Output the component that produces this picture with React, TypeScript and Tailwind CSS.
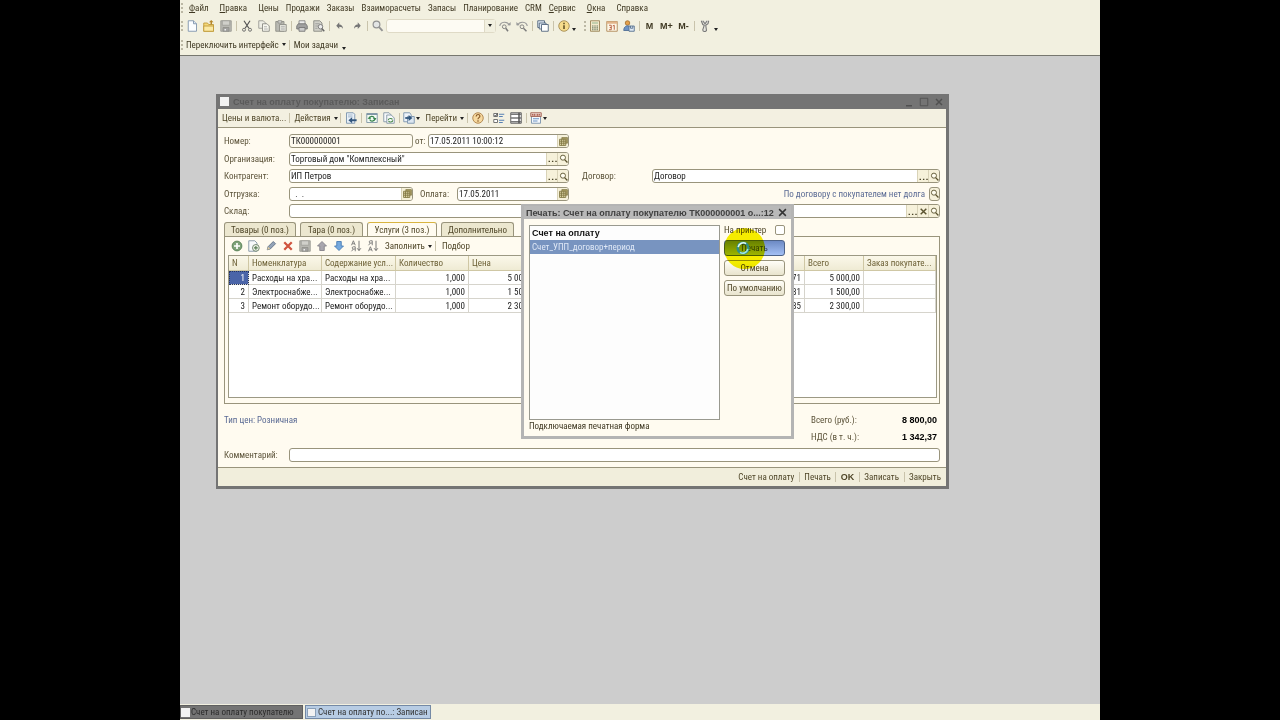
import { useState } from 'react';
import type { ReactNode } from 'react';
import clsx from 'clsx';

type IconProps = { children: ReactNode; className?: string };

function Icon({ children, className }: IconProps) {
  return (
    <svg viewBox="0 0 16 16" className={clsx('shrink-0', className ?? 'h-3 w-3')} fill="none" stroke="#7b7b7b" strokeWidth="1.2" aria-hidden="true">
      {children}
    </svg>
  );
}

const icons = {
  newDoc: (
    <Icon>
      <path d="M3 1h7l4 4v10H3z" fill="#fbfdff" stroke="#7f93ab" />
      <path d="M10 1v4h4" fill="#dbe6f2" stroke="#7f93ab" />
    </Icon>
  ),
  open: (
    <Icon>
      <path d="M1 15V4h5l1.500 2H14v9z" fill="#f5d878" stroke="#bf9a3a" />
      <path d="M1 15V8h13v7z" fill="#fbe9a4" stroke="#bf9a3a" />
      <path d="M10 6V3H8l3-3 3 3h-2v3z" stroke="none" fill="#b5862a" />
    </Icon>
  ),
  save: (
    <Icon>
      <path d="M1 1h14v14H1z" fill="#b8b8b2" stroke="#9c9c96" />
      <path d="M3 1h10v6H3z" fill="#d0d0ca" stroke="#a0a09a" />
      <path d="M4 10h8v5H4z" fill="#a2a2a0" stroke="#92928c" />
      <path d="M6 12h2v2H6z" fill="#eee" stroke="none" />
    </Icon>
  ),
  cut: (
    <Icon>
      <path d="M4 1l6.500 10M12 1L5.500 11" stroke="#555" strokeWidth="1.600" />
      <circle cx="4" cy="13" r="2" stroke="#666" />
      <circle cx="12" cy="13" r="2" stroke="#666" />
    </Icon>
  ),
  copy: (
    <Icon>
      <path d="M1 1h6l3 3v7H1z" fill="#eeeee6" stroke="#9a9a94" />
      <path d="M6 5h6l3 3v7H6z" fill="#f6f6ee" stroke="#8a8a84" />
      <path d="M8 9h4M8 12h5" stroke="#aaa" />
    </Icon>
  ),
  paste: (
    <Icon>
      <path d="M1 2h11v13H1z" fill="#b9b9b2" stroke="#8f8f88" />
      <path d="M4 1h5v3H4z" fill="#ddd" stroke="#8f8f88" />
      <path d="M6 6h9v9H6z" fill="#e2e2da" stroke="#8f8f88" />
      <path d="M8 9h5M8 12h5" stroke="#aaa" />
    </Icon>
  ),
  print: (
    <Icon>
      <path d="M4 6V1h8v5" fill="#eee" stroke="#888" />
      <path d="M3 5h10l2 3v4H1V8z" fill="#a0a0a0" stroke="#767676" />
      <path d="M4 10h8v5H4z" fill="#ccc" stroke="#777" />
    </Icon>
  ),
  preview: (
    <Icon>
      <path d="M1 1h8l3 3v11H1z" fill="#d0d0c8" stroke="#8b8b85" />
      <path d="M3 5h6M3 8h4M3 11h3" stroke="#999" />
      <circle cx="10" cy="9" r="3" fill="#ececec" stroke="#777" />
      <path d="M12 11.500l3 3.500" stroke="#666" strokeWidth="2" />
    </Icon>
  ),
  undo: (
    <Icon>
      <path d="M7 3L3 7.500 7 12V9c3 0 4 1 5 3 0-4-2-6-5-6z" fill="#757575" stroke="none" />
    </Icon>
  ),
  redo: (
    <Icon>
      <path d="M9 3l4 4.500L9 12V9c-3 0-4 1-5 3 0-4 2-6 5-6z" fill="#757575" stroke="none" />
    </Icon>
  ),
  find: (
    <Icon>
      <circle cx="6" cy="6" r="4.500" fill="#e3e5e5" stroke="#929292" strokeWidth="1.600" />
      <path d="M9.500 9.500L14 14.500" stroke="#929292" strokeWidth="2.500" />
    </Icon>
  ),
  findNext: (
    <Icon>
      <path d="M1 8c1-6 10-7 13-1" stroke="#999" strokeWidth="1.500" />
      <path d="M11 7h4.500V2.500z" fill="#999" stroke="none" />
      <circle cx="7" cy="9" r="2.500" />
      <path d="M9 11l3 4" strokeWidth="2" />
    </Icon>
  ),
  findPrev: (
    <Icon>
      <path d="M15 8C14 2 5 1 2 7" stroke="#999" strokeWidth="1.500" />
      <path d="M5 7H.5V2.500z" fill="#999" stroke="none" />
      <circle cx="8" cy="9" r="2.500" />
      <path d="M10 11l4 4" strokeWidth="2" />
    </Icon>
  ),
  windows: (
    <Icon>
      <path d="M1 1h9v9H1z" fill="#e4edf7" stroke="#53677e" />
      <path d="M3 4h9v8H3z" fill="#e4edf7" stroke="#53677e" />
      <path d="M6 6h9v9H6z" fill="#fff" stroke="#53677e" />
    </Icon>
  ),
  info: (
    <Icon>
      <circle cx="8" cy="8" r="7" fill="#f6dc8c" stroke="#a58c55" />
      <path d="M8 7v5M8 3.500v2" stroke="#5b4a20" strokeWidth="2" />
    </Icon>
  ),
  calc: (
    <Icon>
      <path d="M2 1h12v14H2z" fill="#f2e9cc" stroke="#9b8558" />
      <path d="M4 3h8v2H4z" fill="#b3c7a4" stroke="none" />
      <path d="M4 8h8M4 10.500h8M4 13h8" stroke="#6f7f66" strokeDasharray="2 1" strokeWidth="1.500" />
    </Icon>
  ),
  calendar: (
    <Icon>
      <path d="M1 2h14v13H1z" fill="#fdf6e6" stroke="#b08a5a" />
      <path d="M1 2h14v3H1z" fill="#e2b48a" stroke="none" />
      <path d="M4 7h3v6H4M5 10h2M9 8l2-1v6" stroke="#b35a3a" />
    </Icon>
  ),
  user: (
    <Icon>
      <circle cx="6" cy="4" r="3" fill="#e5a04a" stroke="#a87532" />
      <path d="M1 14c0-8 9-8 9-2v2z" fill="#6d93c4" stroke="#506f96" />
      <path d="M8 8h7v7H8z" fill="#dfe9f4" stroke="#58728f" />
      <path d="M10 8v3h3V8" stroke="#58728f" />
    </Icon>
  ),
  tools: (
    <Icon>
      <path d="M3 1l2 5 2 1-2 6c0 3 4 3 5 1l-1-7 3-2 1-4M5 1l3 4 3-4" fill="#e6e6de" stroke="#777" strokeWidth="1.400" />
    </Icon>
  ),
  close: (
    <Icon>
      <path d="M2 1h9l2 2v12H2z" fill="#e8f0f8" stroke="#7b93ad" />
      <path d="M4 4h6M4 6.500h6" stroke="#9fb3c8" />
      <path d="M15.500 11H8" stroke="#32567d" strokeWidth="2.600" />
      <path d="M9.500 7v8L4.500 11z" fill="#32567d" stroke="none" />
    </Icon>
  ),
  refresh: (
    <Icon>
      <path d="M1 2h14v12H1z" fill="#f3faf3" stroke="#8096a6" />
      <path d="M1 3h14" stroke="#8096a6" strokeWidth="2" />
      <path d="M4 9c1-4 6-4 7-1M12 9c-1 4-6 4-7 1" stroke="#38844d" strokeWidth="1.600" />
      <path d="M9 8h5l-2 3zM2 9h5L5 6z" fill="#38844d" stroke="none" />
    </Icon>
  ),
  copyRefresh: (
    <Icon>
      <path d="M1 1h7l3 3v9H1z" fill="#f7f9fb" stroke="#8496a6" />
      <path d="M5 4h6l4 4v7H5z" fill="#f7f9fb" stroke="#8496a6" />
      <path d="M7 11c0-3 5-3 5.500-1M13 11c0 3-5 3-5.500 1" stroke="#4a8a4a" strokeWidth="1.500" />
    </Icon>
  ),
  copyAdd: (
    <Icon>
      <path d="M1 1h8l3 3v11H1z" fill="#f7f9fb" stroke="#8496a6" />
      <circle cx="10.500" cy="10.500" r="4.500" fill="#eef3ea" stroke="#6a7f66" />
      <path d="M8 10.500h5M10.500 8v5" stroke="#567a52" strokeWidth="1.500" />
    </Icon>
  ),
  based: (
    <Icon>
      <path d="M1 1h8l2 3v9H1z" fill="#edf3fa" stroke="#7b93ad" />
      <path d="M6 6h9v9H6z" fill="#dbe6f1" stroke="#7b93ad" />
      <path d="M3 8h5" stroke="#32567d" strokeWidth="2.400" />
      <path d="M7.500 4v8l5-4z" fill="#32567d" stroke="none" />
    </Icon>
  ),
  help: (
    <Icon>
      <circle cx="8" cy="8" r="7" fill="#f6d9a0" stroke="#ae8148" />
      <path d="M5.500 6c0-3.500 5-3.500 5-.500C10.500 7.500 8 7.500 8 9.500M8 11v2" stroke="#8a5a28" strokeWidth="1.600" />
    </Icon>
  ),
  settings: (
    <Icon>
      <path d="M1 2h5v4H1zM1 10h5v4H1z" fill="#fff" stroke="#666" />
      <path d="M2 4l1.500 1.500L6 2" stroke="#333" />
      <path d="M8 3h7M8 6h5M8 11h7M8 14h5" stroke="#5780b5" strokeWidth="1.500" />
    </Icon>
  ),
  rows: (
    <Icon>
      <path d="M1 1h14v14H1z" fill="#fff" stroke="#555" />
      <path d="M1 3h14M1 8h14M1 13h14" stroke="#777" strokeWidth="2" />
      <path d="M12 1v14" stroke="#555" strokeWidth="2" />
    </Icon>
  ),
  report: (
    <Icon>
      <path d="M2 2h12v13H2z" fill="#f4f8fd" stroke="#7b93ad" />
      <path d="M1 1h14v5H1z" fill="#f2dfd6" stroke="#a06050" />
      <path d="M3 5V3l1.500 1L6 3v2M8 3v2M10 5V3l1.500 1L13 3v2" stroke="#a04a3a" />
      <path d="M4 9h8M4 12h6" stroke="#6d93c4" strokeWidth="1.500" />
    </Icon>
  ),
  add: (
    <Icon>
      <circle cx="8" cy="8" r="6.500" fill="#7fa37a" stroke="#567f52" />
      <path d="M4 8h8M8 4v8" stroke="#fff" strokeWidth="2.200" />
    </Icon>
  ),
  pencil: (
    <Icon>
      <path d="M3 13l1-4 7-7 3 3-7 7z" fill="#93a3b7" stroke="#607186" />
      <path d="M3 13l1-4 3 3z" fill="#e0cda0" stroke="none" />
    </Icon>
  ),
  remove: (
    <Icon>
      <path d="M3 3l10 10M13 3L3 13" stroke="#d0543f" strokeWidth="3" />
    </Icon>
  ),
  up: (
    <Icon>
      <path d="M8 2l6 6h-3v6H5V8H2z" fill="#a9a6ad" stroke="#85828a" />
    </Icon>
  ),
  down: (
    <Icon>
      <path d="M8 14l6-6h-3V2H5v6H2z" fill="#76a9de" stroke="#4a7db5" />
    </Icon>
  ),
  sortAsc: (
    <Icon>
      <path d="M2 7l2.500-6L7 7M3 5h3M7 15V9H4.500a1.500 1.500 0 000 3H7M4.500 12L2 15" stroke="#777" />
      <path d="M12 1v13m-2.500-3l2.500 3 2.500-3" stroke="#666" />
    </Icon>
  ),
  sortDesc: (
    <Icon>
      <path d="M7 7V1H4.500a1.500 1.500 0 000 3H7M4.500 4L2 7M2 15l2.500-6L7 15M3 13h3" stroke="#777" />
      <path d="M12 1v13m-2.500-3l2.500 3 2.500-3" stroke="#666" />
    </Icon>
  ),
  grid: (
    <Icon className="h-[9px] w-[9px]">
      <path d="M5 1h10v10H5z" fill="#a99c62" stroke="#7e7440" />
      <path d="M1 4h11v11H1z" fill="#e4dcae" stroke="#7e7440" strokeWidth="1.500" />
      <path d="M1 7.500h11M1 11h11M4.500 4v11M8.500 4v11" stroke="#7e7440" strokeWidth="1.500" />
    </Icon>
  ),
  lens: (
    <Icon className="h-[9px] w-[9px]">
      <circle cx="7" cy="6.500" r="4.500" fill="#fffdf0" stroke="#5b5330" strokeWidth="1.600" />
      <path d="M10 10l5 5" stroke="#5b5330" strokeWidth="2.400" />
    </Icon>
  ),
  cross: (
    <Icon className="h-[9px] w-[9px]">
      <path d="M3 3l10 10M13 3L3 13" stroke="#5b5330" strokeWidth="2.600" />
    </Icon>
  ),
  dots: (
    <Icon className="h-[9px] w-[9px]">
      <path d="M1 13h2.500M7 13h2.500M13 13h2.500" stroke="#4a4428" strokeWidth="2.200" />
    </Icon>
  ),
};

const boldFont = "font-['Liberation_Sans',Arial,sans-serif] font-bold";

function Caret() {
  return <span className="h-0 w-0 shrink-0 border-x-2 border-t-[3px] border-x-transparent border-t-[#222]" />;
}

function Sep() {
  return (
    <span className="flex w-1 shrink-0 justify-center">
      <span className="h-[10px] w-px bg-[#c9c3ab]" />
    </span>
  );
}

function Grip() {
  return <span className="h-[10px] w-[3px] shrink-0 border-r-2 border-dotted border-[#bcb8a5]" />;
}

function Tool({ icon, label, wide }: { icon: keyof typeof icons; label: string; wide?: boolean }) {
  return (
    <button type="button" aria-label={label} className={clsx('flex shrink-0 items-center justify-center gap-px', wide ? 'w-5' : 'w-[17px]')}>
      {icons[icon]}
      {wide && <Caret />}
    </button>
  );
}

type FieldProps = {
  id: string;
  label: string;
  value?: string;
  buttons?: (keyof typeof icons)[];
  labelClass: string;
  className: string;
};

function Field({ id, label, value = '', buttons = [], labelClass, className }: FieldProps) {
  return (
    <>
      <label htmlFor={id} className={clsx('shrink-0 text-[#5b5238]', labelClass)}>{label}</label>
      <div className={clsx('flex h-[14px] min-w-0 overflow-hidden rounded-[3px] border border-[#99947c]', className)}>
        <input id={id} defaultValue={value} className="min-w-0 flex-1 bg-transparent pl-px text-[#1b1b1b] outline-none" />
        {buttons.map((b) => (
          <button key={b} type="button" aria-label={b} className="flex w-[11px] shrink-0 items-center justify-center border-l border-[#d9d3b8] bg-[#f6f1da]">
            {icons[b]}
          </button>
        ))}
      </div>
    </>
  );
}

const menu = [
  ['Ф', 'айл'],
  ['П', 'равка'],
  ['', 'Цены'],
  ['', 'Продажи'],
  ['', 'Заказы'],
  ['', 'Взаиморасчеты'],
  ['', 'Запасы'],
  ['', 'Планирование'],
  ['', 'CRM'],
  ['С', 'ервис'],
  ['О', 'кна'],
  ['', 'Справка'],
];

function MainMenu() {
  return (
    <header className="border-b border-[#77776f] bg-[#f2f0e0] pb-px text-[#3f3822]">
      <div className="flex h-4 items-center">
        <Grip />
        <nav className="flex gap-[7px] pl-[6px]">
          {menu.map(([key, rest]) => (
            <button key={rest} type="button" className={clsx('shrink-0', key && 'pr-1')}>
              <span className="underline">{key}</span>{rest}
            </button>
          ))}
        </nav>
      </div>
      <div className="flex h-[19px] items-center">
        <Grip />
        <Tool icon="newDoc" label="Новый" />
        <Tool icon="open" label="Открыть" />
        <Tool icon="save" label="Сохранить" />
        <Sep />
        <Tool icon="cut" label="Вырезать" />
        <Tool icon="copy" label="Копировать" />
        <Tool icon="paste" label="Вставить" />
        <Sep />
        <Tool icon="print" label="Печать" />
        <Tool icon="preview" label="Просмотр" />
        <Sep />
        <Tool icon="undo" label="Отменить" />
        <Tool icon="redo" label="Вернуть" />
        <Sep />
        <Tool icon="find" label="Найти" />
        <div className="flex h-[14px] w-[110px] shrink-0 rounded-[3px] border border-[#dfdac6] bg-[#fdfbf3]">
          <input aria-label="Поиск" className="min-w-0 flex-1 bg-transparent outline-none" />
          <button type="button" aria-label="История поиска" className="flex w-[11px] items-center justify-center border-l border-[#dfdac6] bg-[#f2f0e0]">
            <Caret />
          </button>
        </div>
        <Tool icon="findNext" label="Найти далее" />
        <Tool icon="findPrev" label="Найти ранее" />
        <Sep />
        <Tool icon="windows" label="Список окон" />
        <Sep />
        <Tool icon="info" label="О программе" />
        <span className="flex w-[11px] pt-2"><Caret /></span>
        <Grip />
        <Tool icon="calc" label="Калькулятор" />
        <Tool icon="calendar" label="Календарь" />
        <Tool icon="user" label="Пользователи" />
        <Sep />
        <button type="button" className={clsx('w-[17px]', boldFont)}>M</button>
        <button type="button" className={clsx('w-[17px]', boldFont)}>M+</button>
        <button type="button" className={clsx('w-[17px]', boldFont)}>M-</button>
        <Sep />
        <Tool icon="tools" label="Сервис" />
        <span className="flex pt-2 pl-px"><Caret /></span>
      </div>
      <div className="flex h-[19px] items-center">
        <Grip />
        <button type="button" className="ml-[3px] flex items-center gap-[3px]">Переключить интерфейс <Caret /></button>
        <span className="px-[2px]"><Sep /></span>
        <button type="button">Мои задачи</button>
        <span className="flex pt-2 pl-1"><Caret /></span>
      </div>
    </header>
  );
}

const tabs = [
  { title: 'Товары (0 поз.)', width: 'w-[72px]' },
  { title: 'Тара (0 поз.)', width: 'w-[63px]' },
  { title: 'Услуги (3 поз.)', width: 'w-[70px]' },
  { title: 'Дополнительно', width: 'w-[73px]' },
];

const rows = [
  { n: 1, item: 'Расходы на хра...', qty: '1,000', price: '5 000,00', vat: '762,71', total: '5 000,00' },
  { n: 2, item: 'Электроснабже...', qty: '1,000', price: '1 500,00', vat: '228,81', total: '1 500,00' },
  { n: 3, item: 'Ремонт оборудо...', qty: '1,000', price: '2 300,00', vat: '350,85', total: '2 300,00' },
];

function ServicesTable() {
  const th = 'border-r border-b border-[#cfc7a4] px-[3px] text-left font-normal';
  const td = 'border-r border-b border-[#d6d4cc] px-[3px] whitespace-nowrap';
  return (
    <div className="h-[143px] overflow-hidden border border-[#9c9984] bg-white">
      <table className="w-full table-fixed border-separate border-spacing-0">
        <colgroup>
          <col className="w-5" />
          <col className="w-[73px]" />
          <col className="w-[74px]" />
          <col className="w-[73px]" />
          <col className="w-[73px]" />
          <col />
          <col className="w-[59px]" />
          <col className="w-[72px]" />
        </colgroup>
        <thead>
          <tr className="h-[15px] bg-gradient-to-b from-[#fbf8ea] to-[#eeead2] text-[#6b5f34]">
            <th className={th}>N</th>
            <th className={th}>Номенклатура</th>
            <th className={th}>Содержание усл...</th>
            <th className={th}>Количество</th>
            <th className={th}>Цена</th>
            <th className={th}></th>
            <th className={th}>Всего</th>
            <th className={th}>Заказ покупате...</th>
          </tr>
        </thead>
        <tbody className="text-[#222]">
          {rows.map((row) => (
            <tr key={row.n} className="h-[14px]">
              <td className={clsx(td, 'text-right', row.n === 1 && 'bg-[#4a64a8] text-white outline-1 -outline-offset-1 outline-dotted outline-[#26355f]')}>{row.n}</td>
              <td className={td}>{row.item}</td>
              <td className={td}>{row.item}</td>
              <td className={clsx(td, 'text-right')}>{row.qty}</td>
              <td className={clsx(td, 'text-right')}>{row.price}</td>
              <td className={clsx(td, 'text-right')}>{row.vat}</td>
              <td className={clsx(td, 'text-right')}>{row.total}</td>
              <td className={td}></td>
            </tr>
          ))}
        </tbody>
      </table>
    </div>
  );
}

function InvoiceWindow() {
  const [active, setActive] = useState(2);
  return (
    <section className="absolute top-[38px] left-9 flex w-[733px] flex-col border-r-[3px] border-b-[3px] border-l-2 border-[#747474] bg-[#fffbf0]">
      <div className="flex h-[15px] items-center gap-1 bg-[#747474] pl-[2px] text-[#5a5a5a]">
        <span className="h-[9px] w-[9px] shrink-0 bg-[#f2f2f2]" />
        <h1 className={clsx('flex-1', boldFont)}>Счет на оплату покупателю: Записан</h1>
        <div className="flex gap-[3px] pr-px">
          <button type="button" aria-label="Свернуть"><Icon><path d="M4 13h8" stroke="#505050" strokeWidth="2" /></Icon></button>
          <button type="button" aria-label="Развернуть"><Icon><path d="M3 3h10v10H3z" stroke="#505050" /></Icon></button>
          <button type="button" aria-label="Закрыть окно"><Icon><path d="M4 4l8 8M12 4l-8 8" stroke="#505050" strokeWidth="2" /></Icon></button>
        </div>
      </div>

      <div className="flex h-[19px] items-center border-b border-[#99947c] bg-[#f3f0e1] pl-1 text-[#4f4628]">
        <button type="button" className="mr-px">Цены и валюта...</button>
        <Sep />
        <button type="button" className="mr-px ml-[3px] flex items-center gap-[3px]">Действия <Caret /></button>
        <Sep />
        <Tool icon="close" label="Записать и закрыть" />
        <Sep />
        <Tool icon="refresh" label="Перечитать" />
        <Tool icon="copyRefresh" label="Скопировать" />
        <Sep />
        <Tool icon="based" label="Ввести на основании" wide />
        <button type="button" className="mr-px ml-1 flex items-center gap-[3px]">Перейти <Caret /></button>
        <Sep />
        <Tool icon="help" label="Справка" />
        <Sep />
        <Tool icon="settings" label="Настройка" />
        <Tool icon="rows" label="Список" />
        <Sep />
        <Tool icon="report" label="Отчет" wide />
      </div>

      <form className="px-[6px] pt-[6px]" onSubmit={(e) => e.preventDefault()}>
        <div className="flex h-[84px] flex-col justify-between">
          <div className="flex items-center">
            <Field id="number" label="Номер:" value="ТК000000001" labelClass="w-[65px]" className="w-[124px] bg-[#fffbf0]" />
            <Field id="date" label="от:" value="17.05.2011 10:00:12" buttons={['grid']} labelClass="ml-[2px] w-[13px]" className="w-[141px] bg-white" />
          </div>
          <div className="flex items-center">
            <Field id="org" label="Организация:" value={'Торговый дом "Комплексный"'} buttons={['dots', 'lens']} labelClass="w-[65px]" className="w-[280px] bg-white" />
          </div>
          <div className="flex items-center">
            <Field id="partner" label="Контрагент:" value="ИП Петров" buttons={['dots', 'lens']} labelClass="w-[65px]" className="w-[280px] bg-white" />
            <Field id="contract" label="Договор:" value="Договор" buttons={['dots', 'lens']} labelClass="ml-[13px] w-[70px]" className="flex-1 bg-white" />
          </div>
          <div className="flex items-center">
            <Field id="shipping" label="Отгрузка:" value="  .  ." buttons={['grid']} labelClass="w-[65px]" className="w-[124px] bg-white" />
            <Field id="payment" label="Оплата:" value="17.05.2011" buttons={['grid']} labelClass="ml-[7px] w-[37px]" className="w-[112px] bg-white" />
            <a href="#debt" className="ml-auto text-[#5a6a94]">По договору с покупателем нет долга</a>
            <button type="button" aria-label="Подробно" className="ml-1 flex h-[14px] w-[11px] items-center justify-center rounded-[3px] border border-[#99947c] bg-[#f6f1da]">
              {icons.lens}
            </button>
          </div>
          <div className="flex items-center">
            <Field id="store" label="Склад:" buttons={['dots', 'cross', 'lens']} labelClass="w-[65px]" className="flex-1 bg-white" />
          </div>
        </div>

        <div className="mt-1 flex h-[14px] items-end gap-1" role="tablist">
          {tabs.map((tab, i) => (
            <button
              key={tab.title}
              type="button"
              role="tab"
              aria-selected={i === active}
              onClick={() => setActive(i)}
              className={clsx(
                'h-[14px] shrink-0 rounded-t-[3px] border border-b-0 text-[#4f4628]',
                tab.width,
                i === active ? 'border-[#99947c] border-t-[#d8b440] bg-[#fffbf0]' : 'border-[#99947c] bg-[#ece7cf]',
              )}
            >
              {tab.title}
            </button>
          ))}
        </div>
        <div className="border border-[#99947c] pr-[2px] pb-[5px] pl-[3px]">
          <div className="flex h-[18px] items-center text-[#4f4628]">
            <Tool icon="add" label="Добавить" />
            <Tool icon="copyAdd" label="Добавить копированием" />
            <Tool icon="pencil" label="Изменить" />
            <Tool icon="remove" label="Удалить" />
            <Tool icon="save" label="Закончить редактирование" />
            <Tool icon="up" label="Вверх" />
            <Tool icon="down" label="Вниз" />
            <Tool icon="sortAsc" label="По возрастанию" />
            <Tool icon="sortDesc" label="По убыванию" />
            <button type="button" className="mr-[2px] ml-1 flex items-center gap-[3px]">Заполнить <Caret /></button>
            <Sep />
            <button type="button" className="ml-1">Подбор</button>
          </div>
          <ServicesTable />
        </div>

        <div className="mt-2 flex justify-between pr-[3px]">
          <a href="#prices" className="h-4 leading-4 text-[#5a6a94]">Тип цен: Розничная</a>
          <dl className="grid w-[126px] grid-cols-2 gap-y-px leading-4">
            <dt className="text-[#5b5238]">Всего (руб.):</dt>
            <dd className={clsx('text-right text-black', boldFont)}>8 800,00</dd>
            <dt className="text-[#5b5238]">НДС (в т. ч.):</dt>
            <dd className={clsx('text-right text-black', boldFont)}>1 342,37</dd>
          </dl>
        </div>
        <div className="mt-[3px] mb-[5px] flex items-center">
          <Field id="comment" label="Комментарий:" labelClass="w-[65px]" className="flex-1 bg-white" />
        </div>
      </form>

      <footer className="flex h-[19px] items-center justify-end gap-[3px] border-t border-[#99947c] bg-[#f1eedc] pr-[5px] text-[#4f4628]">
        <button type="button">Счет на оплату</button>
        <Sep />
        <button type="button">Печать</button>
        <Sep />
        <button type="button" className={boldFont}>OK</button>
        <Sep />
        <button type="button">Записать</button>
        <Sep />
        <button type="button">Закрыть</button>
      </footer>
    </section>
  );
}

function PrintDialog() {
  const button = 'h-4 w-full rounded-[3px] border border-[#99947c] bg-gradient-to-b from-[#fffef8] to-[#e9e4cd] text-[#4f4628]';
  return (
    <section className="absolute top-[148px] left-[341px] w-[273px] border-[3px] border-t-2 border-[#b4b4b4] bg-[#fffbf0]">
      <div className={clsx('flex h-[13px] items-center justify-between bg-[#b9b9b9] pr-1 pl-[2px] text-[#404040]', boldFont)}>
        <h2>Печать: Счет на оплату покупателю ТК000000001 о...:12</h2>
        <button type="button" aria-label="Закрыть"><Icon className="h-[9px] w-[9px]"><path d="M2 2l12 12M14 2L2 14" stroke="#333" strokeWidth="2.600" /></Icon></button>
      </div>
      <div className="flex gap-1 pt-[6px] pr-[6px] pl-[5px]">
        <ul className="h-[195px] flex-1 border border-[#99998f] bg-[#fdfdfd] leading-[14px] text-[#111]">
          <li className={clsx('h-[14px] px-[2px]', boldFont)}>Счет на оплату</li>
          <li className="h-[14px] bg-[#7894c0] px-[2px] text-[#dfe8f6]">Счет_УПП_договор+период</li>
        </ul>
        <div className="flex w-[61px] flex-col gap-[5px]">
          <label className="flex h-[10px] items-center justify-between text-[#4f4628]">
            <span>На принтер</span>
            <input type="checkbox" className="h-[10px] w-[10px] appearance-none rounded-[2px] border border-[#99947c] bg-white" />
          </label>
          <div className="relative flex flex-col gap-1">
            <button type="button" className="h-4 w-full rounded-[3px] border border-[#4c6288] bg-gradient-to-b from-[#6d8ac4] to-[#a4c0f4] text-[#33405c]">Печать</button>
            <button type="button" className={button}>Отмена</button>
            <button type="button" className={button}>По умолчанию</button>
            {/* click highlight with the busy cursor over it */}
            <span className="pointer-events-none absolute -top-3 left-0 h-[41px] w-[41px] rounded-full bg-[#f5f000] mix-blend-multiply" />
            <svg viewBox="0 0 16 16" className="pointer-events-none absolute top-px left-3 h-[14px] w-[14px]" fill="none" aria-hidden="true">
              <circle cx="8" cy="8" r="6" stroke="#2f8f86" strokeWidth="3" />
              <path d="M2.500 7a6 6 0 019-4" stroke="#e4faf6" strokeWidth="1.800" />
              <path d="M13.500 9a6 6 0 01-9 4" stroke="#9fe6e0" strokeWidth="1.800" />
            </svg>
          </div>
        </div>
      </div>
      <p className="h-4 pl-[5px] leading-[13px] text-[#3f3822]">Подключаемая печатная форма</p>
    </section>
  );
}

export default function App() {
  return (
    <div className="flex min-h-screen flex-col bg-black px-[180px] font-['Roboto_Condensed','Liberation_Sans',Arial,sans-serif] text-[9px] leading-3 whitespace-nowrap">
      <MainMenu />
      <main className="relative flex-1 overflow-hidden bg-[#cdcdcd]">
        <InvoiceWindow />
        <PrintDialog />
      </main>
      <div className="flex h-4 items-center gap-[2px] bg-[#f2f0e0] text-[#333]">
        <button type="button" className="flex h-[14px] w-[123px] items-center gap-px border border-[#5f5f5f] bg-[#747474] text-[#2b2b2b]">
          <span className="h-[9px] w-[9px] shrink-0 bg-[#f2f2f2]" />
          Счет на оплату покупателю
        </button>
        <button type="button" className="flex h-[14px] w-[126px] items-center gap-[2px] border border-[#7489a5] bg-[#b7cce4] pl-px">
          <span className="h-[9px] w-[9px] shrink-0 border border-[#8aa0b8] bg-[#f2f2f2]" />
          Счет на оплату по...: Записан
        </button>
      </div>
    </div>
  );
}
